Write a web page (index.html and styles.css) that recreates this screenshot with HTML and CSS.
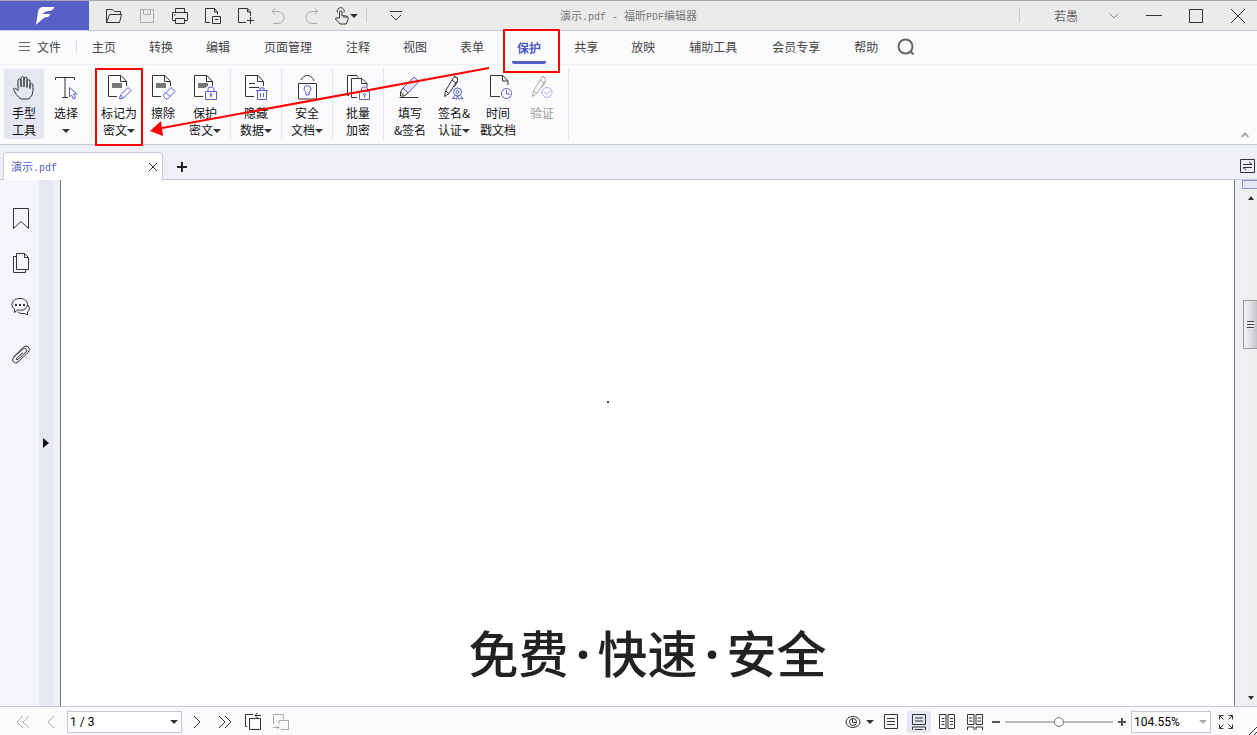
FILE: index.html
```html
<!DOCTYPE html>
<html lang="zh-CN">
<head>
<meta charset="utf-8">
<title>演示.pdf - 福昕PDF编辑器</title>
<link rel="stylesheet" href="styles.css">
</head>
<body>
<svg class="defs" aria-hidden="true">
  <symbol id="doc" viewBox="0 0 26 26"><path d="M11 21.500H2.500V.500H15l5.500 6V11M14.500 .500v6h6"/></symbol>
  <symbol id="pen" viewBox="0 0 26 26"><path d="M3.500 21.500l1-5.500 8-13.500q1.500-1.500 3 0t1 3L8 18.500zM4.500 16l3.500 2.500M11 5l4 3M13 1l4 2.500M13 12l4-6"/></symbol>
</svg>
<div class="app">
  <header class="titlebar">
    <div class="title-left">
      <div class="logo"><svg width="20" height="20" viewBox="0 0 20 20"><path d="M3 6Q4 1 8 1h11.500q-1.500 3.500-5 4-5 0-7 3h8q-1.500 3.500-6 3.500Q6 14 1 19z" fill="#fff"/></svg></div>
      <nav class="quick" aria-label="快速访问">
        <button aria-label="打开"><svg width="18" height="18"><path d="M1.500 15.500v-13h6l2 2h6v3M1.500 15.500l3-8h12l-2 8z"/></svg></button>
        <button aria-label="保存" class="off"><svg width="18" height="18"><path d="M2.500 2.500h13v13h-13zM5.500 2.500v5h7v-5M10 4v1.500"/></svg></button>
        <button aria-label="打印"><svg width="18" height="18"><path d="M4.500 5.500v-4h9v4M4.500 13.500h-3v-8h15v8h-3M4.500 11.500h9v5h-9zM3 8h1.500"/></svg></button>
        <button aria-label="扫描"><svg width="18" height="18"><path d="M6 15.500H1.500v-14h9l3 3.500v2.500M10.500 1.500V5h3M8.500 9.500h8v7h-8zM11 12.500h3"/></svg></button>
        <button aria-label="新建"><svg width="18" height="18"><path d="M9 15.500H1.500v-14h9l3 3.500v4M10.500 1.500V5h3M13.500 10v7M10 13.500h7"/></svg></button>
        <button aria-label="撤销" class="off"><svg width="18" height="18"><path d="M5.500 1.500L2 4.500 5.500 8M2 4.500H8a6 6 0 0 1 0 12H3"/></svg></button>
        <button aria-label="重做" class="off"><svg width="18" height="18"><path d="M11.500 1.500l3.500 3L11.500 8M15 4.500H9a6 6 0 0 0 0 12h5"/></svg></button>
        <button aria-label="触摸模式" class="touch"><svg width="16" height="18"><path d="M5.500 11V4.500q1.200-1.500 2.500 0V9q1-1 2 0 1-.8 2 .3 1.500-.7 2 .7v3l-2 4H6l-4.500-5q0-2 2-1zM3.500 5.500a3.500 3.500 0 1 1 6.500 0M10 9v2M12 9.500V11"/></svg><i class="caret"></i></button>
        <span class="bar"></span>
        <button aria-label="自定义工具栏" class="custom"><svg width="14" height="14"><path d="M1 2.500h12M2 6l5 5 5-5"/></svg></button>
      </nav>
    </div>
    <h1 class="title">演示<span>.pdf - </span>福昕<span>PDF</span>编辑器</h1>
    <div class="title-right">
      <span class="bar"></span>
      <button class="user">若愚<svg width="12" height="12"><path d="M1.500 3.500L6 8l4.500-4.500"/></svg></button>
      <button aria-label="最小化"><svg width="16" height="16"><path d="M0 7.500h16"/></svg></button>
      <button aria-label="最大化"><svg width="16" height="16"><path d="M1.500 1.500h13v13h-13z"/></svg></button>
      <button aria-label="关闭"><svg width="16" height="16"><path d="M1 1l14 14M15 1L1 15"/></svg></button>
    </div>
  </header>

  <nav class="menu" aria-label="功能区">
    <button class="file"><svg width="12" height="12"><path d="M0 1.500h11M0 5.500h11M0 9.500h11"/></svg>文件</button>
    <button>主页</button><button>转换</button><button>编辑</button><button class="wide">页面管理</button><button>注释</button><button>视图</button><button>表单</button><button class="current">保护</button><button>共享</button><button>放映</button><button class="wide">辅助工具</button><button class="wide">会员专享</button><button>帮助</button>
    <button class="search" aria-label="搜索"><svg width="18" height="18"><circle cx="8.500" cy="8.500" r="7"/><path d="M13.500 13.500l3 3"/></svg></button>
  </nav>

  <section class="ribbon" aria-label="保护">
    <div class="group first">
      <button class="tool chosen"><svg class="ico"><path d="M8 22.500Q5 20 2.500 14.500q0-2.500 3.500 0l1 1V5q1.300-2 3 0v7V2.500q1.500-2 3 0V12 3q1.500-2 3 0v9.500V5.500q1.500-1.500 3 0v8-4q1.500-1.500 3 0v6q0 5-4 8.500H10z"/></svg><span>手型<br>工具</span></button>
      <button class="tool"><svg class="ico"><path d="M2.500 5V2.500h19V5M12 2.500v20M9 22.500h6"/><path class="v" d="M16.500 12.500v9.500l2-2 2 4 2-1-2-4h3.500z"/></svg><span>选择<br><i class="caret"></i></span></button>
    </div>
    <div class="group">
      <button class="tool mark"><svg class="ico"><use href="#doc"/><path class="fill" d="M6 8h10v5H6z"/><path class="v" d="M13.500 24l1-4 7.500-7.500 3 3-7.500 7.500zM14.500 20l3 3"/></svg><span>标记为<br>密文<i class="caret"></i></span></button>
      <button class="tool"><svg class="ico"><use href="#doc"/><path class="fill" d="M6 8h10v5H6z"/><path class="v" d="M13.500 20l7.500-7.500 4 4-7.500 7.500h-1.500l-2.500-2.500zM16 17.500l4 4"/></svg><span>擦除<br>&nbsp;</span></button>
      <button class="tool"><svg class="ico"><use href="#doc"/><path class="fill" d="M6 8h10v3l-3 2H6z"/><path class="v" d="M13.500 16.500h11v8h-11zM16 16v-2q0-2 3-2t3 2v2M19 20v2.500"/><circle class="v" cx="19" cy="19.500" r="1"/></svg><span>保护<br>密文<i class="caret"></i></span></button>
    </div>
    <div class="group">
      <button class="tool"><svg class="ico"><use href="#doc"/><path d="M6 8.500h6M6 12.500h10"/><path class="v" d="M13 15.500h12M14.500 16v8.500h9V16M17 15v-2h4v2M17.500 18v4M20.500 18v4"/></svg><span>隐藏<br>数据<i class="caret"></i></span></button>
    </div>
    <div class="group">
      <button class="tool"><svg class="ico"><path d="M4.500 8.500h18v15.500h-18zM7 5q2-4.500 6.500-4.500T20 6"/><path class="v" d="M12 17q-2-1.500-2-3a3.500 3.500 0 0 1 7 0q0 1.500-2 3v3h-3z"/></svg><span>安全<br>文档<i class="caret"></i></span></button>
    </div>
    <div class="group">
      <button class="tool"><svg class="ico"><path d="M4 20.500H2.500V.500H12l1.500 2M12 22.500H6.500v-19H17l5 5V12M16.500 3.500v5H22"/><path class="v" d="M14.500 16.500h10v8h-10zM16.500 16v-2q0-2 3-2t3 2v2M19.500 20v2.500"/><circle class="v" cx="19.500" cy="19.500" r="1"/></svg><span>批量<br>加密</span></button>
    </div>
    <div class="group">
      <button class="tool"><svg class="ico"><path class="v tint" d="M6 13L17 2l5 4.500L11 18z"/><path d="M6 13l-2.500 4v4h3.500l4-3M3.500 17l4 4M2.500 22.500h19"/></svg><span>填写<br>&amp;签名</span></button>
      <button class="tool"><svg class="ico"><use href="#pen"/><circle class="v" cx="16.500" cy="17" r="4"/><circle class="v" cx="16.500" cy="17" r="1.500"/><path class="v" d="M14 20.500l-2.500 3h3l1 1 1-4 1.500 4 1-1h3l-2.500-3"/></svg><span>签名&amp;<br>认证<i class="caret"></i></span></button>
      <button class="tool"><svg class="ico"><path d="M15 21.500H5.500V.500H18l5 5.500v4M17.500 .500V6H23"/><circle class="v" cx="21.500" cy="18.500" r="5"/><path class="v" d="M21.500 15v4H25"/></svg><span>时间<br>戳文档</span></button>
      <button class="tool off" disabled><svg class="ico"><use href="#pen"/><circle class="v" cx="18" cy="17.500" r="5"/><path class="v" d="M15.500 17l2 2.500 4-4"/></svg><span>验证<br>&nbsp;</span></button>
    </div>
    <button class="fold" aria-label="折叠功能区"><svg width="10" height="8"><path d="M1.500 6L5 2.500 8.500 6"/></svg></button>
  </section>

  <div class="tabs">
    <div class="tab"><a href="#page">演示<span>.pdf</span></a><button aria-label="关闭标签"><svg width="10" height="10"><path d="M1 1l8 8M9 1L1 9"/></svg></button></div>
    <button class="add" aria-label="新标签"><svg width="12" height="12"><path d="M6 1v10M1 6h10"/></svg></button>
    <button class="swap" aria-label="切换标签"><svg width="16" height="16"><path d="M1.500 1.500h14v13h-14zM4 6.500h9L10 4M13 9.500H4L7 12"/></svg></button>
  </div>

  <main class="work">
    <nav class="side" aria-label="面板">
      <button aria-label="书签"><svg width="20" height="24"><path d="M2.500 1.500h15v20l-7.500-7-7.500 7z"/></svg></button>
      <button aria-label="页面"><svg width="20" height="24"><path d="M5.500 1.500h8l4 4v12h-12zM13.500 1.500v4h4M5.500 4.500h-3v16h12v-3"/></svg></button>
      <button aria-label="注释"><svg width="20" height="24"><path d="M9 1.500c-5 0-8 2.500-8 6 0 2 1 3.500 2.500 4.500v3.500l3-2.500c6.500 1 10-1.500 10-5.500 0-3.500-3-6-7.500-6zM17 8q3 4-.5 7v3L13.500 16.500q-4 1-6.500-1.500"/><path class="dots" d="M4 8h10"/></svg></button>
      <button aria-label="附件"><svg width="20" height="24"><path d="M2.500 15L12 5.500q3-3 5.500-.500t-.500 5.500L7 20q-2.500 2-4.500 0t0-4.500L12 7q1.500-1.500 3 0t0 3l-8 7.500q-1.500 1-2-.500l7-6.500"/></svg></button>
    </nav>
    <button class="expand" aria-label="展开面板"><i></i></button>
    <article class="page" id="page">
      <span class="speck"></span>
      <h2>免费<span>·</span>快速<span>·</span>安全</h2>
    </article>
    <div class="scroll">
      <i class="split"></i>
      <button aria-label="向上"><i class="up"></i></button>
      <div class="track"><div class="thumb"><i></i></div></div>
      <button aria-label="向下"><i class="caret"></i></button>
    </div>
  </main>

  <footer class="status">
    <button class="off" aria-label="首页"><svg width="14" height="14"><path d="M7 1L1 7l6 6M13 1L7 7l6 6"/></svg></button>
    <button class="off" aria-label="上一页"><svg width="14" height="14"><path d="M10 1L4 7l6 6"/></svg></button>
    <div class="combo pageno"><input type="text" value="1 / 3" aria-label="页码"><button aria-label="选择页码"><i class="caret"></i></button></div>
    <button aria-label="下一页"><svg width="14" height="14"><path d="M4 1l6 6-6 6"/></svg></button>
    <button aria-label="末页"><svg width="14" height="14"><path d="M1 1l6 6-6 6M7 1l6 6-6 6"/></svg></button>
    <button aria-label="上一视图"><svg width="18" height="18"><path d="M3 13.500H1.500v-12H9M5.500 5.500h11v11h-11zM17 2.500h-6M13.500 0L11 2.500 13.500 5"/></svg></button>
    <button class="off" aria-label="下一视图"><svg width="18" height="18"><path d="M2 10.500h-.500v-9h10v5M7 11V7.500h9.500v9H9M1 14.500h6M5 12.500l2 2-2 2"/></svg></button>
    <div class="views">
      <button class="eye" aria-label="阅读模式"><svg width="16" height="16"><ellipse cx="8" cy="8" rx="7" ry="5.500"/><circle cx="8" cy="8" r="3.500"/><path d="M7.500 5v3.500H11"/></svg><i class="caret"></i></button>
      <button aria-label="单页"><svg width="16" height="16"><path d="M1.500 .500h13v14h-13zM4 4.500h8M4 7.500h8M4 10.500h8"/></svg></button>
      <button class="chosen" aria-label="连续"><svg width="16" height="16"><path d="M1.500 .500h13v10h-13zM4 4h8M4 7h8M1.500 16v-3h13v3M4 15.500h8"/></svg></button>
      <button aria-label="双页"><svg width="16" height="16"><path d="M.500 .500h6.500v14H.500zM9 .500h6.500v14H9zM2.500 4.500h3M2.500 7.500h3M2.500 10.500h3M11 4.500h3M11 7.500h3M11 10.500h3"/></svg></button>
      <button aria-label="双页连续"><svg width="16" height="16"><path d="M.500 .500h6.500v10H.500zM9 .500h6.500v10H9zM2 4h3.500M2 7h3.500M10.500 4H14M10.500 7H14M.500 16v-3h6.500v3M9 16v-3h6.500v3"/></svg></button>
    </div>
    <button class="step" aria-label="缩小"><svg width="10" height="10"><path d="M1 5h8"/></svg></button>
    <input class="zoom" type="range" min="0" max="100" value="50" aria-label="缩放">
    <button class="step" aria-label="放大"><svg width="10" height="10"><path d="M1 5h8M5 1v8"/></svg></button>
    <div class="combo percent"><input type="text" value="104.55%" aria-label="缩放比例"><button aria-label="选择比例"><i class="caret"></i></button></div>
    <button class="full" aria-label="全屏"><svg width="16" height="16"><path d="M1.500 5.500v-4h4M1.500 1.500l4 4M10.500 1.500h4v4M14.500 1.500l-4 4M1.500 10.500v4h4M1.500 14.500l4-4M14.500 10.500v4h-4M14.500 14.500l-4-4"/></svg></button>
    <svg class="grip" width="8" height="8"><path d="M0 8l8-8M5 8l3-3"/></svg>
  </footer>

  <svg class="notes" width="570" height="150" aria-hidden="true">
    <path d="M96 69h46v76H96zM504 30h55v42h-55zM489 68L162 128"/>
    <path class="head" d="M150 131l11-10 2 15z"/>
  </svg>
</div>
</body>
</html>
```
FILE: styles.css
```css
* { box-sizing: border-box; }
body {
  margin: 0;
  font: 12px/17px "Noto Sans CJK SC", sans-serif;
  color: #222;
}
button {
  display: flex;
  align-items: center;
  justify-content: center;
  flex: none;
  margin: 0;
  padding: 0;
  border: 0;
  background: none;
  font: inherit;
  color: inherit;
}
svg {
  display: block;
  flex: none;
  fill: none;
  stroke: #333;
}
.defs { position: absolute; width: 0; height: 0; }
.app {
  position: relative;
  display: flex;
  flex-direction: column;
  height: 100vh;
  overflow: hidden;
  background: #fbfbfe;
}
.caret {
  display: inline-block;
  border: 4px solid transparent;
  border-top-color: #333;
  border-bottom: 0;
}
.off svg { stroke: #aaa; }
.bar { width: 1px; height: 13px; background: #c8c8c8; }

.titlebar {
  display: grid;
  grid-template-columns: 1fr auto 1fr;
  align-items: center;
  height: 31px;
  border-top: 1px solid #a6a6a6;
  border-bottom: 1px solid #c5cada;
  background: #ebebeb;
}
.title-left, .quick { display: flex; align-items: center; }
.logo {
  display: flex;
  align-items: center;
  justify-content: center;
  width: 89px;
  height: 29px;
  background: #5860c8;
}
.logo svg { stroke: none; }
.quick { padding-left: 8px; }
.quick button { width: 33px; height: 29px; }
.quick .touch { width: 35px; gap: 0; margin-right: 3px; }
.quick .custom { margin-left: 12px; }
.title {
  margin: 0;
  font-size: 11px;
  font-weight: 400;
  color: #777;
  white-space: pre;
}
.title span, .tab span { font: 10px "Liberation Mono", monospace; }
.title-right { display: flex; align-items: center; justify-content: flex-end; margin-right: -2px; }
.title-right button { width: 42px; height: 29px; }
.title-right .user { width: 68px; margin: 0 12px 0 33px; gap: 30px; color: #666; }
.user svg { stroke: #888; }

.menu {
  display: flex;
  align-items: center;
  gap: 33px;
  height: 34px;
  padding: 0 0 2px 19px;
  border-bottom: 1px solid #f0f1f5;
  color: #444;
}
.menu button { height: 31px; }
.menu .file {
  gap: 6px;
  height: 13px;
  padding-right: 15px;
  border-right: 1px solid #d8dae4;
  margin-right: -18px;
}
.menu .file svg { stroke: #666; }
.menu .wide { margin: 0 1px; }
.menu .current {
  align-self: flex-end;
  width: 34px;
  height: 33px;
  margin: 0 -5px -2px;
  border-top: 2px solid transparent;
  border-bottom: 3px solid #5860c8;
  border-radius: 2px;
  font-weight: 700;
  color: #5058c8;
}
.menu .search { margin-left: -14px; }
.search svg { stroke: #666; stroke-width: 2; }

.ribbon {
  display: flex;
  height: 80px;
  padding: 4px 0 5px;
  border-bottom: 1px solid #c5cada;
}
.group {
  display: flex;
  padding: 0 4px;
  border-right: 1px solid #e0e2ec;
}
.group.first { padding-right: 3px; }
.tool {
  flex-direction: column;
  justify-content: flex-start;
  width: 42px;
  padding-top: 6px;
  gap: 3px;
  white-space: nowrap;
  color: #111;
}
.group:last-of-type .tool, .first .tool { width: 44px; }
.tool.mark { width: 46px; }
.first .chosen { width: 40px; }
.chosen { background: #e5e8f2; border-radius: 2px; }
.ico { width: 26px; height: 26px; overflow: visible; }
.ico .v { stroke: #5860c8; }
.ico .tint { fill: #e4e5fb; }
.ico .fill { fill: #777; stroke: none; }
.tool .caret { margin: 0 0 2px; }
.tool.off { color: #999; }
.off .ico .v { stroke: #a9ade4; }
.fold { align-self: flex-end; margin: 0 7px 0 auto; }
.fold svg { stroke: #aaa; stroke-width: 2; }

.tabs {
  display: flex;
  height: 35px;
  padding-left: 3px;
  align-items: flex-end;
  background: #eff0f5;
  border-bottom: 1px solid #c5cada;
}
.tab {
  display: flex;
  align-items: center;
  justify-content: space-between;
  width: 160px;
  height: 28px;
  margin-bottom: -1px;
  padding: 0 4px 0 7px;
  border: 1px solid #c5cada;
  border-bottom: 0;
  border-radius: 4px 4px 0 0;
  background: #fff;
}
.tab a { font-size: 11px; color: #5860c8; text-decoration: none; }
.tab button { height: 20px; }
.add { width: 38px; height: 24px; }
.add svg { stroke-width: 2; stroke: #222; }
.swap { height: 27px; margin-left: auto; margin-right: 2px; }

.work { display: flex; flex: 1; min-height: 0; background: #eff0f5; }
.side {
  display: flex;
  flex-direction: column;
  gap: 21px;
  width: 39px;
  padding: 27px 0 0 2px;
  background: #f4f5fa;
}
.side .dots { stroke-width: 2; stroke-dasharray: 2 2; }
.expand { width: 14px; background: #e5e8f2; margin-right: 7px; }
.expand i { border: 5px solid transparent; border-left: 6px solid #111; border-right: 0; }
.page {
  display: flex;
  flex-direction: column;
  align-items: center;
  justify-content: flex-end;
  flex: 1;
  padding-bottom: 16px;
  border: solid #777;
  border-width: 0 1px;
  background: #fff;
}
.speck { width: 2px; height: 2px; margin: 0 80px 212px 0; background: #444; }
.page h2 {
  margin: 0;
  font-size: 50px;
  line-height: 72px;
  font-weight: 500;
  color: #222;
}
.page h2 span { display: inline-block; width: 29px; text-align: center; font-family: "Noto Sans", sans-serif; font-weight: 700; }
.scroll {
  display: flex;
  flex-direction: column;
  width: 15px;
  margin-left: 7px;
  background: #efefef;
}
.split { height: 9px; border: 1px solid #8e98bd; border-right: 0; background: #e5e8f2; }
.scroll button { height: 17px; padding-left: 2px; }
.up { border: 3px solid transparent; border-bottom: 4px solid #333; border-top: 0; }
.scroll .caret { border-width: 4px 3px 0; }
.track { flex: 1; padding: 94px 0 0 1px; }
.thumb {
  display: flex;
  align-items: center;
  justify-content: center;
  height: 49px;
  border: 1px solid #999;
  border-right: 0;
  border-radius: 2px 0 0 2px;
  background: linear-gradient(90deg, #f4f4f4, #e0e0e3 50%, #c4c4ca);
}
.thumb i { width: 7px; height: 8px; background: repeating-linear-gradient(#444 0 1px, #eee 1px 3px); }

.status {
  position: relative;
  display: flex;
  align-items: center;
  height: 29px;
  padding: 2px 0 0 9px;
  border-top: 1px solid #c5cada;
}
.status > button { width: 28px; height: 24px; }
.combo {
  display: flex;
  height: 22px;
  border: 1px solid #c0c5d8;
  background: #fff;
}
.combo input {
  flex: 1;
  min-width: 0;
  padding: 0 0 0 2px;
  border: 0;
  background: none;
  font: 12px Roboto, "Noto Sans CJK SC", sans-serif;
  color: #000;
}
.combo button { width: 14px; }
.pageno { width: 115px; margin: 0 1px 0 2px; }
.percent { width: 80px; }
.percent .caret { border-top-color: #aaa; }
.views { display: flex; gap: 4px; margin-left: auto; }
.views button { width: 24px; height: 22px; }
.views .eye { width: 32px; gap: 5px; }
.status > .step { width: 18px; }
.step svg { stroke-width: 2; stroke: #555; }
.zoom {
  appearance: none;
  width: 108px;
  height: 12px;
  margin: 0;
  background: linear-gradient(#bbb, #bbb) center / 100% 2px no-repeat;
}
.zoom::-webkit-slider-thumb {
  appearance: none;
  width: 10px;
  height: 10px;
  border: 1px solid #777;
  border-radius: 50%;
  background: #fff;
}
.status > .full { width: 30px; margin-right: 16px; }
.grip { position: absolute; right: 0; bottom: 0; }

.notes {
  position: absolute;
  left: 0;
  top: 0;
  stroke: #f00;
  stroke-width: 2;
  pointer-events: none;
}
.notes .head { fill: #f00; stroke: none; }
```
